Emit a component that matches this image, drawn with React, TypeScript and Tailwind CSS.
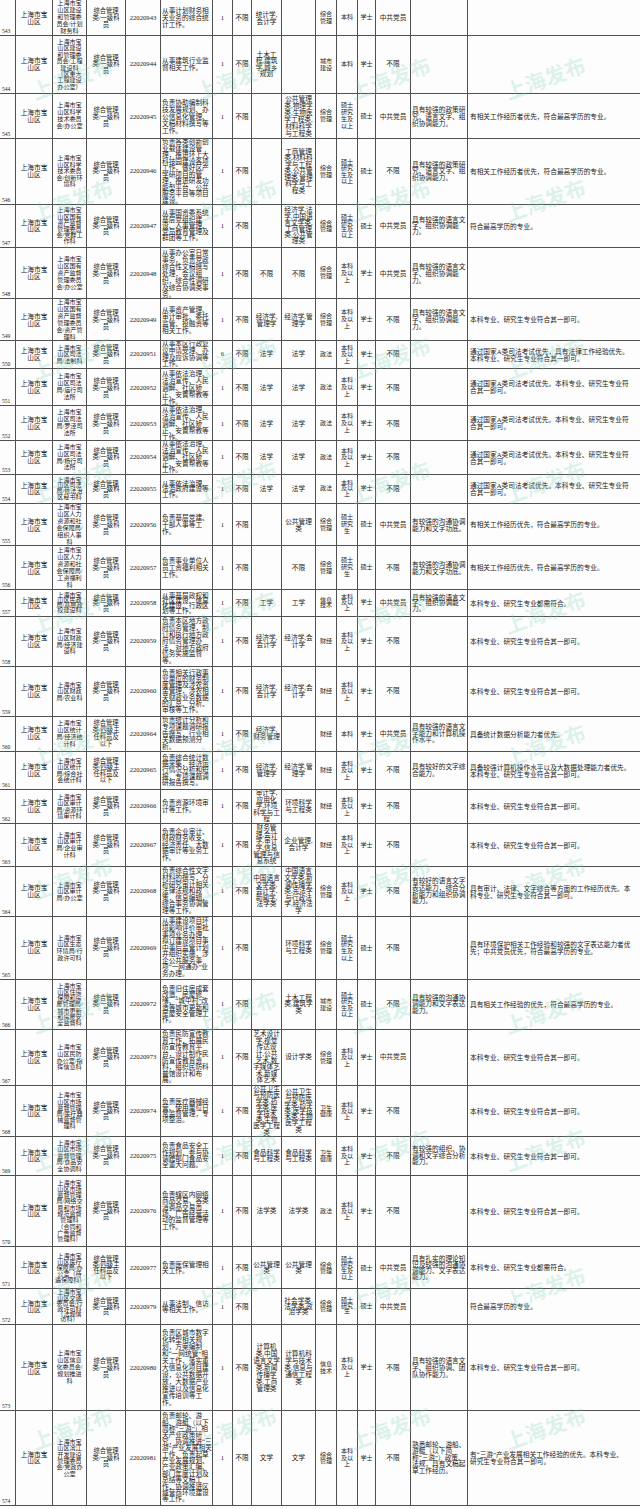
import React from "react";

type Row = {
  n: string;
  h: string;
  lh?: string;
  dept: string;
  cat: string;
  code: string;
  desc: string;
  num: string;
  ug: string;
  gr: string;
  ex: string;
  edu: string;
  deg: string;
  pol: string;
  oth: string;
  note: string;
};

const A = "综合管理类/一级科员";
const B = "综合管理类/四级主任科员及以下";
const SF = "通过国家A类司法考试优先。本科专业、研究生专业符\n合其一即可。";
const QY = "本科专业、研究生专业符合其一即可。";

const rows: Row[] = [
  { n: "543", h: "h-[36px]", dept: "上海市宝山区建设和管理委员会/计划财务科", cat: A, code: "22020943", desc: "从事计划财务相关业务的综合统计工作。", num: "1", ug: "统计学,会计学", gr: "", ex: "综合管理", edu: "本科", deg: "学士", pol: "中共党员", oth: "", note: "" },
  { n: "544", h: "h-[58px]", lh: "leading-[6.4px]", dept: "上海市宝山区建设和管理委员会/工程建设科（区重大工程建设办公室）", cat: A, code: "22020944", desc: "从事建筑行业监督相关工作。", num: "1", ug: "土木工程,建筑学,城乡规划", gr: "", ex: "城市建设", edu: "本科", deg: "学士", pol: "不限", oth: "", note: "" },
  { n: "545", h: "h-[45px]", dept: "上海市宝山区科学技术委员会/办公室", cat: A, code: "22020945", desc: "负责协助编制科技发展规划、办公信息化管理、文稿材料撰写等工作。", num: "1", ug: "", gr: "公共管理类,物理学类,生物医学工程类,材料科学与工程类", ex: "综合管理", edu: "硕士研究生及以上", deg: "硕士", pol: "中共党员", oth: "具有较强的政策研究、语言文字、组织协调能力。", note: "有相关工作经历者优先，符合最高学历的专业。" },
  { n: "546", h: "h-[66px]", lh: "leading-[6.5px]", dept: "上海市宝山区科学技术委员会/创新环境科", cat: A, code: "22020946", desc: "负责各类创新创业载体建设管理，推进环上大科技园建设各项工作，做好区产学研项目的管理，推进研发功能型平台、公共服务平台等项目建设。", num: "1", ug: "", gr: "工商管理类,材料科学与工程类,公共管理类,管理科学与工程类", ex: "综合管理", edu: "硕士研究生及以上", deg: "硕士", pol: "不限", oth: "具有较强的政策研究、语言文字、组织协调能力。", note: "有相关工作经历者优先，符合最高学历的专业。" },
  { n: "547", h: "h-[43px]", lh: "leading-[6.2px]", dept: "上海市宝山区国有资产监督管理委员会/党群工作科", cat: A, code: "22020947", desc: "从事国资委系统基层党组织建设、人事管理、党员教育管理及群团等工作。", num: "1", ug: "", gr: "经济学,法学,中国语言文学类,工商管理类,公共管理类", ex: "综合管理", edu: "硕士研究生及以上", deg: "硕士", pol: "中共党员", oth: "具有较强的语言文字、组织协调能力。", note: "符合最高学历的专业。" },
  { n: "548", h: "h-[51px]", dept: "上海市宝山区国有资产监督管理委员会/办公室", cat: A, code: "22020948", desc: "从事办公室日常事务，负责党政综合性文稿撰写处理，会议组织，综合性调研及综合协调类事务。", num: "1", ug: "不限", gr: "不限", ex: "综合管理", edu: "本科及以上", deg: "学士", pol: "中共党员", oth: "具有较强的语言文字、组织协调能力。", note: "" },
  { n: "549", h: "h-[42px]", dept: "上海市宝山区国有资产监督管理委员会/资产管理科", cat: A, code: "22020949", desc: "从事资产管理、审计审批、委托监管、投融资等相关工作。", num: "1", ug: "经济学,管理学", gr: "经济学,管理学", ex: "综合管理", edu: "本科及以上", deg: "学士", pol: "不限", oth: "具有较强的语言文字、组织协调能力。", note: QY },
  { n: "550", h: "h-[28px]", lh: "leading-[6.6px]", dept: "上海市宝山区司法局/法制科", cat: A, code: "22020951", desc: "从事本区行政复议申请受理、办理及应诉协调等工作。", num: "6", ug: "法学", gr: "法学", ex: "政法", edu: "本科及以上", deg: "学士", pol: "不限", oth: "", note: "通过国家A类司法考试优先，具有法律工作经验优先。\n本科专业、研究生专业符合其一即可。" },
  { n: "551", h: "h-[37px]", dept: "上海市宝山区司法局/庙行司法所", cat: A, code: "22020952", desc: "从事依法治理、法治宣传、人民调解、社区矫正、安置帮教等工作。", num: "1", ug: "法学", gr: "法学", ex: "政法", edu: "本科及以上", deg: "学士", pol: "不限", oth: "", note: SF },
  { n: "552", h: "h-[35px]", dept: "上海市宝山区司法局/罗泾司法所", cat: A, code: "22020953", desc: "从事依法治理、法治宣传、人民调解、社区矫正、安置帮教等工作。", num: "1", ug: "法学", gr: "法学", ex: "政法", edu: "本科及以上", deg: "学士", pol: "不限", oth: "", note: SF },
  { n: "553", h: "h-[34px]", lh: "leading-[6.6px]", dept: "上海市宝山区司法局/杨行司法所", cat: A, code: "22020954", desc: "从事依法治理、法治宣传、人民调解、社区矫正、安置帮教等工作。", num: "1", ug: "法学", gr: "法学", ex: "政法", edu: "本科及以上", deg: "学士", pol: "不限", oth: "", note: SF },
  { n: "554", h: "h-[29px]", lh: "leading-[5.6px]", dept: "上海市宝山区司法局/依法治区秘书科", cat: A, code: "22020955", desc: "从事依法治理、法治政府建设等工作。", num: "1", ug: "法学", gr: "法学", ex: "政法", edu: "本科及以上", deg: "学士", pol: "不限", oth: "", note: SF },
  { n: "555", h: "h-[42px]", dept: "上海市宝山区人力资源和社会保障局/组织人事科", cat: A, code: "22020956", desc: "负责基层党建、干部人事等工作。", num: "1", ug: "", gr: "公共管理类", ex: "综合管理", edu: "硕士研究生", deg: "硕士", pol: "中共党员", oth: "有较强的沟通协调能力和文字功底。", note: "有相关工作经历优先，符合最高学历的专业。" },
  { n: "556", h: "h-[44px]", dept: "上海市宝山区人力资源和社会保障局/工资福利科", cat: A, code: "22020957", desc: "负责事业单位人员工资福利相关工作。", num: "1", ug: "", gr: "不限", ex: "综合管理", edu: "硕士研究生", deg: "硕士", pol: "不限", oth: "有较强的沟通协调能力和文字功底。", note: "有相关工作经历优先，符合最高学历的专业。" },
  { n: "557", h: "h-[27px]", lh: "leading-[5.2px]", dept: "上海市宝山区民政局/基层政权建设科", cat: A, code: "22020958", desc: "从事基层政权和社区建设、信息化建设、行政区划等工作。", num: "1", ug: "工学", gr: "工学", ex: "信息技术", edu: "本科及以上", deg: "学士", pol: "中共党员", oth: "具有较强的语言文字、组织协调能力。", note: "本科专业、研究生专业都需符合。" },
  { n: "558", h: "h-[50px]", lh: "leading-[6.6px]", dept: "上海市宝山区财政局/经济建设科", cat: A, code: "22020959", desc: "负责本区地方政府债务管理，制订和执行地方政府债务管理办法，对地方政府债务实施监督等。", num: "1", ug: "经济学,会计学", gr: "经济学,会计学", ex: "财经", edu: "本科及以上", deg: "学士", pol: "不限", oth: "", note: QY },
  { n: "559", h: "h-[50px]", lh: "leading-[6.2px]", dept: "上海市宝山区财政局/农业科", cat: A, code: "22020960", desc: "负责相关行政事业单位的财务制度管理及涉农资金管理，涉农相关财政业务数据的汇总、分析、审核等工作。", num: "1", ug: "经济学,会计学", gr: "经济学,会计学", ex: "财经", edu: "本科及以上", deg: "学士", pol: "不限", oth: "", note: QY },
  { n: "560", h: "h-[35px]", lh: "leading-[6.8px]", dept: "上海市宝山区统计局/经济统计科", cat: B, code: "22020964", desc: "负责统计分析和专项课题调研报告撰写，行业相关数据预测分析。", num: "1", ug: "经济学,财务管理", gr: "", ex: "财经", edu: "本科", deg: "学士", pol: "中共党员", oth: "具有较强的语言文字能力和计算机操作水平。", note: "具备统计数据分析能力者优先。" },
  { n: "561", h: "h-[38px]", lh: "leading-[6.2px]", dept: "上海市宝山区统计局/综合社会统计科", cat: B, code: "22020965", desc: "负责综合统计数据采集，经济运行情况分析和短报，专项课题调研报告撰写。", num: "1", ug: "经济学,管理学", gr: "经济学,管理学", ex: "财经", edu: "本科及以上", deg: "学士", pol: "不限", oth: "具有较好的文字综合能力。", note: "具备较强计算机操作水平以及大数据处理能力者优先。\n本科专业、研究生专业符合其一即可。" },
  { n: "562", h: "h-[34px]", lh: "leading-[6.5px]", dept: "上海市宝山区审计局/资源环境审计科", cat: A, code: "22020966", desc: "负责资源环境审计等工作。", num: "1", ug: "审计学,应用化学,环境科学与工程", gr: "环境科学与工程类", ex: "财经", edu: "本科及以上", deg: "学士", pol: "不限", oth: "", note: QY },
  { n: "563", h: "h-[43px]", lh: "leading-[6.6px]", dept: "上海市宝山区审计局/企业审计科", cat: A, code: "22020967", desc: "负责企业审计、财政财务收支、经济责任、大数据审计等业务工作。", num: "1", ug: "财务管理,会计学,审计学,信息管理与信息系统", gr: "企业管理,会计学", ex: "财经", edu: "本科及以上", deg: "学士", pol: "不限", oth: "", note: QY },
  { n: "564", h: "h-[50px]", lh: "leading-[6.6px]", dept: "上海市宝山区审计局/办公室", cat: A, code: "22020968", desc: "负责综合性文字材料的撰写，分析研究审计相关法律法规和政策，信息编辑，综合事务协调管理等工作。", num: "1", ug: "中国语言文学类,会计学,新闻学,法学类", gr: "中国语言文学类,新闻传播学类,宪法学与行政法学,经济法学", ex: "综合管理", edu: "本科及以上", deg: "学士", pol: "不限", oth: "有较好的语言文字表达能力，综合分析能力和组织协调能力。", note: "具有审计、法律、文字综合等方面的工作经历优先。本\n科专业、研究生专业符合其一即可。" },
  { n: "565", h: "h-[63px]", lh: "leading-[6.6px]", dept: "上海市宝山区生态环境局/行政许可科", cat: A, code: "22020969", desc: "从事建设项目环境影响评价审批事项业务办理，拟订建设项目事中事后监管计划并组织实施，涉企公共服务事项“一网通办”业务办理。", num: "1", ug: "", gr: "环境科学与工程类", ex: "综合管理", edu: "硕士研究生及以上", deg: "硕士", pol: "不限", oth: "", note: "具有环境保护相关工作经验和较强的文字表达能力者优\n先；中共党员优先，符合最高学历的专业。" },
  { n: "566", h: "h-[50px]", lh: "leading-[6.2px]", dept: "上海市宝山区住房保障和房屋管理局/城市更新和房屋安全监督科", cat: A, code: "22020972", desc: "负责旧住房成套改造、房屋修缮、“城中村”改造等城市更新和房屋安全管理工作。", num: "1", ug: "", gr: "土木工程类,建筑学类", ex: "城市建设", edu: "硕士研究生及以上", deg: "硕士", pol: "不限", oth: "具有较强的沟通协调能力和文字表达能力。", note: "具有相关工作经验的优先，符合最高学历的专业。" },
  { n: "567", h: "h-[56px]", lh: "leading-[6.6px]", dept: "上海市宝山区民防办公室/指挥信息科", cat: A, code: "22020973", desc: "负责民防宣传教育工作，拓展民防宣传教育平台，设计制作民防宣传教育资料，组织民防科普馆设计和布展。", num: "1", ug: "艺术设计学,视觉传达设计,公共艺术,数字媒体艺术,新媒体艺术", gr: "设计学类", ex: "综合管理", edu: "本科及以上", deg: "学士", pol: "中共党员", oth: "", note: QY },
  { n: "568", h: "h-[51px]", lh: "leading-[6.2px]", dept: "上海市宝山区市场监督管理局/医疗器械监督管理科", cat: A, code: "22020974", desc: "负责医疗器械经营、使用单位日常监督管理，专项整治。", num: "1", ug: "公共卫生与预防医学类,药学类,医学技术类,生物医学工程类", gr: "公共卫生与预防医学类,药学类,医学技术类,生物医学工程类", ex: "卫生健康", edu: "本科及以上", deg: "学士", pol: "不限", oth: "", note: QY },
  { n: "569", h: "h-[39px]", lh: "leading-[6.4px]", dept: "上海市宝山区市场监督管理局/食品安全协调科", cat: A, code: "22020975", desc: "负责食品安全工作规划，参与协调跨部门食品安全重大问题。", num: "1", ug: "食品科学与工程类", gr: "食品科学与工程类", ex: "卫生健康", edu: "本科及以上", deg: "学士", pol: "不限", oth: "有较强的组织、协调和文字综合分析能力。", note: QY },
  { n: "570", h: "h-[71px]", lh: "leading-[6.3px]", dept: "上海市宝山区市场监督管理局/网络交易和市场规范监督管理科（合同和广告监督管理科）", cat: A, code: "22020976", desc: "负责辖区内网络商品交易、各类消费品交易市场、广告经营活动的监督管理等工作。", num: "1", ug: "法学类", gr: "法学类", ex: "政法", edu: "本科及以上", deg: "学士", pol: "不限", oth: "", note: QY },
  { n: "571", h: "h-[42px]", lh: "leading-[6px]", dept: "上海市宝山区医疗保障局/办公室（待遇保障科）", cat: B, code: "22020977", desc: "负责医保管理相关工作。", num: "1", ug: "公共管理类", gr: "公共管理类", ex: "综合管理", edu: "硕士研究生及以上", deg: "硕士", pol: "中共党员", oth: "具有扎实的理论知识及较强的沟通协调能力、文字表达能力。", note: "本科专业、研究生专业都需符合。" },
  { n: "572", h: "h-[36px]", lh: "leading-[5.4px]", dept: "上海市宝山区交通委员会/行政许可科（法规信访科）", cat: A, code: "22020979", desc: "从事法制、信访等相关工作。", num: "1", ug: "", gr: "社会学类,法学类,政治学类", ex: "综合管理", edu: "硕士研究生", deg: "硕士", pol: "中共党员", oth: "", note: "符合最高学历的专业。" },
  { n: "573", h: "h-[86px]", dept: "上海市宝山区信息化委员会/规划推进科", cat: A, code: "22020980", desc: "负责区城市数字化转型相关规划，方案编制和“一网统管”相关工作，落实重大信息化项目建设，公共数据开放，大数据产业推进以及信息化宣传培训等工作。", num: "1", ug: "计算机类,中国语言文学类,新闻传播学类,工商管理类", gr: "计算机科学与技术类,信息与通信工程类", ex: "信息技术", edu: "本科及以上", deg: "学士", pol: "不限", oth: "具有较强的语言文字、组织协调、团队协作能力。", note: QY },
  { n: "574", h: "h-[95px]", lh: "leading-[6.4px]", dept: "上海市宝山区滨江开发建设管理委员会/党政办公室", cat: A, code: "22020981", desc: "负责邮轮、游船、游艇（以下简称“三游”）相关产业政策研究，协调推进“三游”产业发展相关工作，负责起草产业发展规划、产业政策汇编、部门年度计划及总结等文稿工作，协调推进区域营商环境建设等工作。", num: "1", ug: "文学", gr: "文学", ex: "综合管理", edu: "本科及以上", deg: "学士", pol: "不限", oth: "熟悉邮轮、游船、游艇（以下简称“三游”）政策、法规，具有文稿起草工作经历。", note: "有“三游”产业发展相关工作经验的优先。本科专业、\n研究生专业符合其一即可。" },
];

const wmRows = [78, 200, 358, 482, 612, 745, 878, 1012, 1150, 1288, 1428];
const wmCols = [72, 236, 390, 545];

const cell = "border-r border-[#505050] overflow-hidden flex items-center";

function TableRow({ r }: { r: Row }) {
  return (
    <div className={`grid grid-cols-[16px_37px_34px_39px_35px_52px_20px_19px_30px_34px_21px_21px_18px_35px_57px_172px] border-b border-[#505050] ${r.h} ${r.lh ?? "leading-[7px]"}`}>
      <div className={`${cell} items-end justify-start pl-[2px] pb-[1px] text-[5.6px] leading-[6px]`}>{r.n}</div>
      <div className={`${cell} justify-center text-center px-[3px]`}>上海市宝山区</div>
      <div className={`${cell} justify-center text-center px-[2px] text-[6.1px]`}>{r.dept}</div>
      <div className={`${cell} justify-center text-center px-[4px] text-[6.3px]`}>{r.cat}</div>
      <div className={`${cell} justify-center text-center border-[#2a2a2a]`}>{r.code}</div>
      <div className={`${cell} justify-start text-left pl-[1px] border-[#2a2a2a]`}>{r.desc}</div>
      <div className={`${cell} justify-center text-center`}>{r.num}</div>
      <div className={`${cell} justify-center text-center`}>不限</div>
      <div className={`${cell} justify-center text-center px-[1px]`}>{r.ug}</div>
      <div className={`${cell} justify-center text-center px-[1px]`}>{r.gr}</div>
      <div className={`${cell} justify-center text-center px-[1px] text-[6.1px]`}>{r.ex}</div>
      <div className={`${cell} justify-center text-center px-[1px] text-[6.1px]`}>{r.edu}</div>
      <div className={`${cell} justify-center text-center text-[6.1px]`}>{r.deg}</div>
      <div className={`${cell} justify-center text-center`}>{r.pol}</div>
      <div className={`${cell} justify-start text-left pl-[1px]`}>{r.oth}</div>
      <div className="overflow-hidden flex items-center justify-start text-left pl-[2px] whitespace-pre-line leading-[7px]">{r.note}</div>
    </div>
  );
}

export default function App() {
  return (
    <div className="relative w-[640px] h-[1509px] overflow-hidden bg-[#fdfdfd] text-[#222222] text-[6.7px] leading-[7px] font-['Liberation_Serif','Noto_Sans_CJK_SC',serif]">
      <div className="flex flex-col">
        {rows.map((r) => (
          <TableRow key={r.n} r={r} />
        ))}
      </div>
      {wmRows.map((y, i) =>
        wmCols.map((x, j) => (
          <div
            key={`${i}-${j}`}
            className="absolute pointer-events-none select-none -translate-x-1/2 -translate-y-1/2 -rotate-[20deg] text-[21px] leading-none font-bold whitespace-nowrap text-[#7fcdb8]/25 font-['Noto_Sans_CJK_SC',sans-serif]"
            style={{ left: x, top: y }}
          >
            上海发布
          </div>
        ))
      )}
    </div>
  );
}
